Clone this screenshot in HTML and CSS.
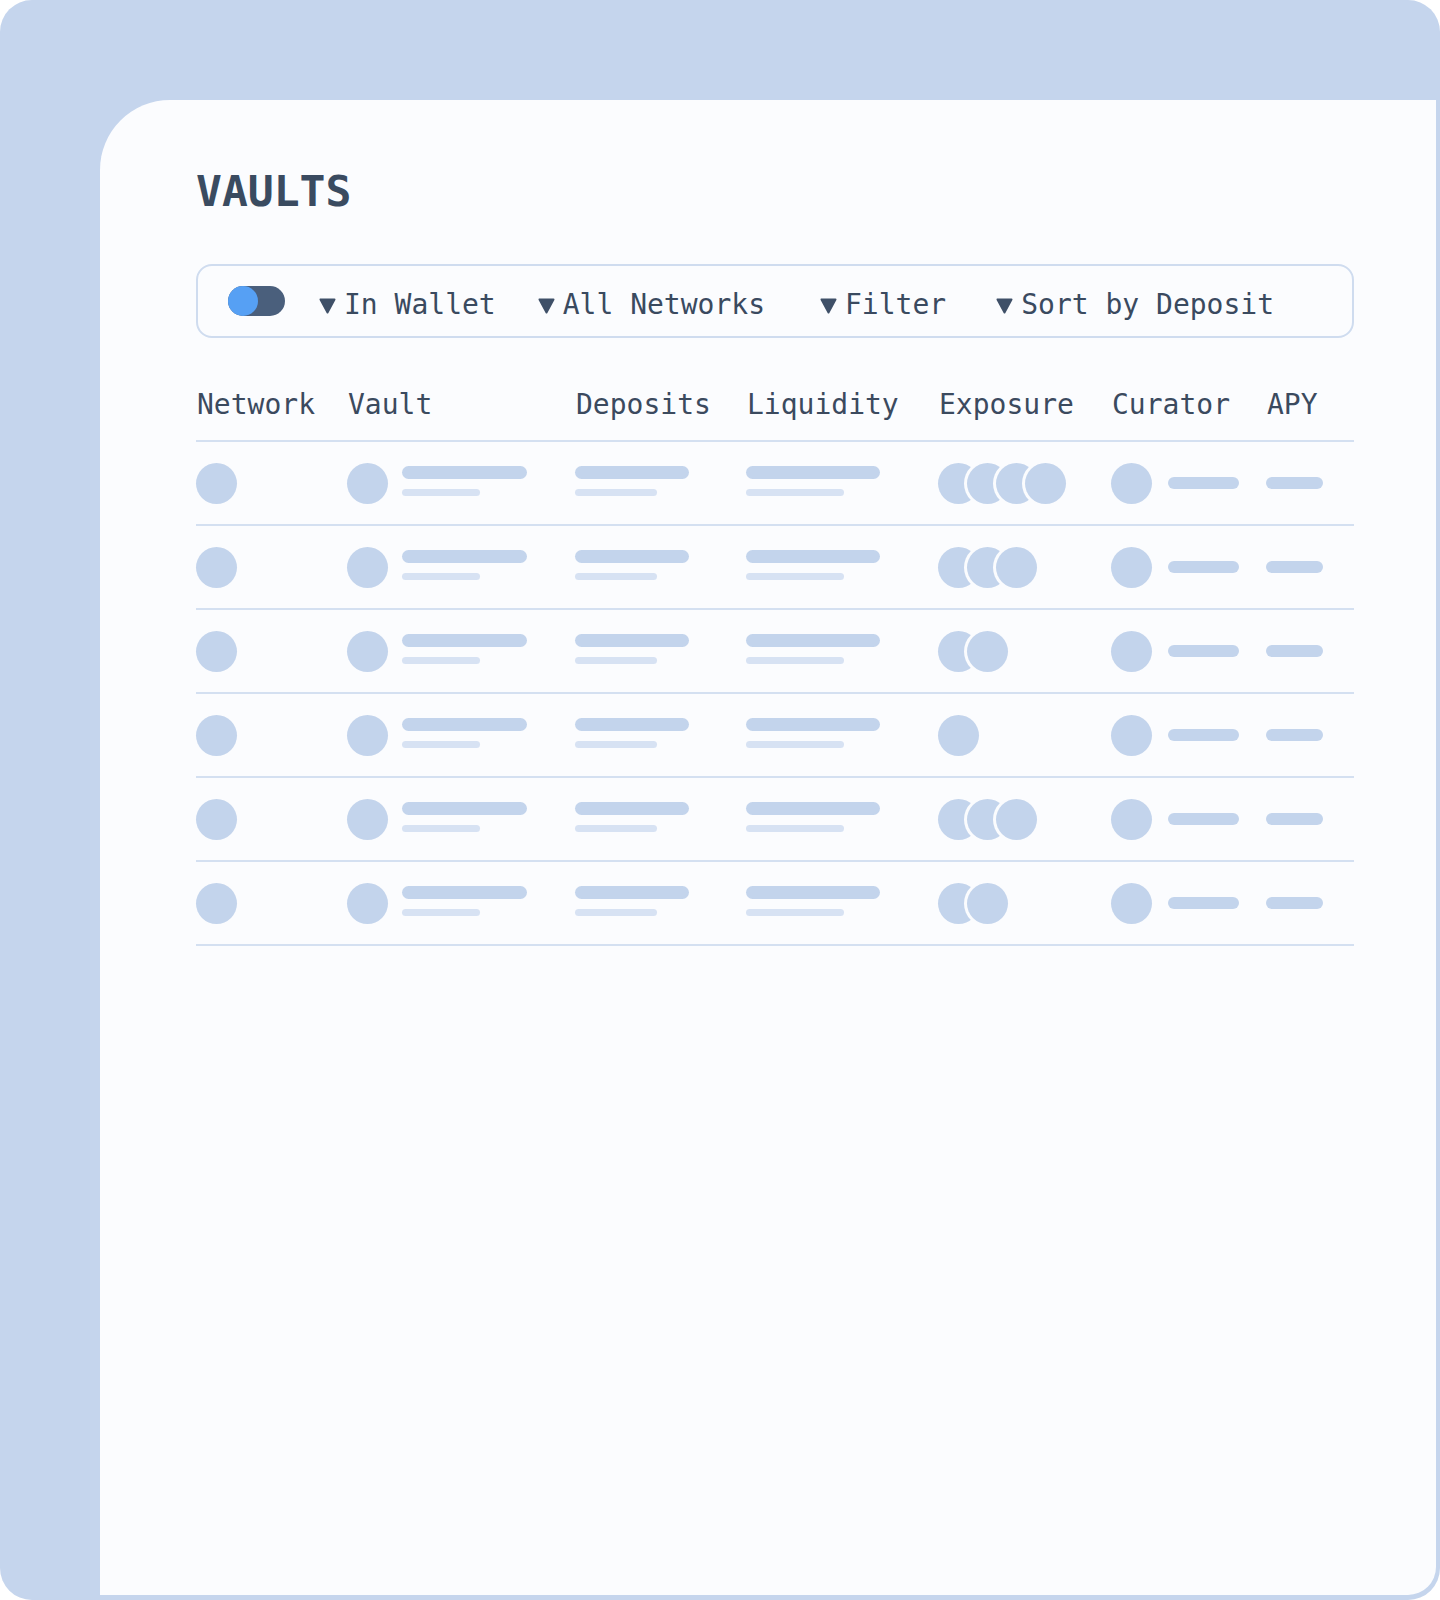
FILE: index.html
```html
<!DOCTYPE html>
<html>
<head>
<meta charset="utf-8">
<link rel="stylesheet" href="styles.css">
</head>
<body>
<div class="frame">
  <div class="panel">
    <h1 class="title">VAULTS</h1>
    <div class="toolbar">
      <div class="toggle"><span class="knob"></span></div>
      <div class="filters">
        <div class="filter"><svg class="caret" viewBox="0 0 17 16"><path d="M1.5 1.5 L15.5 1.5 L8.5 14.5 Z"/></svg><span>In Wallet</span></div>
        <div class="filter"><svg class="caret" viewBox="0 0 17 16"><path d="M1.5 1.5 L15.5 1.5 L8.5 14.5 Z"/></svg><span>All Networks</span></div>
        <div class="filter"><svg class="caret" viewBox="0 0 17 16"><path d="M1.5 1.5 L15.5 1.5 L8.5 14.5 Z"/></svg><span>Filter</span></div>
        <div class="filter"><svg class="caret" viewBox="0 0 17 16"><path d="M1.5 1.5 L15.5 1.5 L8.5 14.5 Z"/></svg><span>Sort by Deposit</span></div>
      </div>
    </div>

    <div class="table">
      <div class="row head">
        <div>Network</div><div>Vault</div><div>Deposits</div><div>Liquidity</div><div>Exposure</div><div>Curator</div><div>APY</div>
      </div>

      <div class="row">
        <div><span class="dot"></span></div>
        <div class="cell-pair"><span class="dot"></span><div class="stack"><span class="bar vault-top"></span><span class="bar lite vault-bot"></span></div></div>
        <div class="stack"><span class="bar dep-top"></span><span class="bar lite dep-bot"></span></div>
        <div class="stack"><span class="bar liq-top"></span><span class="bar lite liq-bot"></span></div>
        <div class="exposure"><span class="dot"></span><span class="dot"></span><span class="dot"></span><span class="dot"></span></div>
        <div class="curator"><span class="dot"></span><span class="bar cur"></span></div>
        <div class="apycell"><span class="bar apy"></span></div>
      </div>

      <div class="row">
        <div><span class="dot"></span></div>
        <div class="cell-pair"><span class="dot"></span><div class="stack"><span class="bar vault-top"></span><span class="bar lite vault-bot"></span></div></div>
        <div class="stack"><span class="bar dep-top"></span><span class="bar lite dep-bot"></span></div>
        <div class="stack"><span class="bar liq-top"></span><span class="bar lite liq-bot"></span></div>
        <div class="exposure"><span class="dot"></span><span class="dot"></span><span class="dot"></span></div>
        <div class="curator"><span class="dot"></span><span class="bar cur"></span></div>
        <div class="apycell"><span class="bar apy"></span></div>
      </div>

      <div class="row">
        <div><span class="dot"></span></div>
        <div class="cell-pair"><span class="dot"></span><div class="stack"><span class="bar vault-top"></span><span class="bar lite vault-bot"></span></div></div>
        <div class="stack"><span class="bar dep-top"></span><span class="bar lite dep-bot"></span></div>
        <div class="stack"><span class="bar liq-top"></span><span class="bar lite liq-bot"></span></div>
        <div class="exposure"><span class="dot"></span><span class="dot"></span></div>
        <div class="curator"><span class="dot"></span><span class="bar cur"></span></div>
        <div class="apycell"><span class="bar apy"></span></div>
      </div>

      <div class="row">
        <div><span class="dot"></span></div>
        <div class="cell-pair"><span class="dot"></span><div class="stack"><span class="bar vault-top"></span><span class="bar lite vault-bot"></span></div></div>
        <div class="stack"><span class="bar dep-top"></span><span class="bar lite dep-bot"></span></div>
        <div class="stack"><span class="bar liq-top"></span><span class="bar lite liq-bot"></span></div>
        <div class="exposure"><span class="dot"></span></div>
        <div class="curator"><span class="dot"></span><span class="bar cur"></span></div>
        <div class="apycell"><span class="bar apy"></span></div>
      </div>

      <div class="row">
        <div><span class="dot"></span></div>
        <div class="cell-pair"><span class="dot"></span><div class="stack"><span class="bar vault-top"></span><span class="bar lite vault-bot"></span></div></div>
        <div class="stack"><span class="bar dep-top"></span><span class="bar lite dep-bot"></span></div>
        <div class="stack"><span class="bar liq-top"></span><span class="bar lite liq-bot"></span></div>
        <div class="exposure"><span class="dot"></span><span class="dot"></span><span class="dot"></span></div>
        <div class="curator"><span class="dot"></span><span class="bar cur"></span></div>
        <div class="apycell"><span class="bar apy"></span></div>
      </div>

      <div class="row">
        <div><span class="dot"></span></div>
        <div class="cell-pair"><span class="dot"></span><div class="stack"><span class="bar vault-top"></span><span class="bar lite vault-bot"></span></div></div>
        <div class="stack"><span class="bar dep-top"></span><span class="bar lite dep-bot"></span></div>
        <div class="stack"><span class="bar liq-top"></span><span class="bar lite liq-bot"></span></div>
        <div class="exposure"><span class="dot"></span><span class="dot"></span></div>
        <div class="curator"><span class="dot"></span><span class="bar cur"></span></div>
        <div class="apycell"><span class="bar apy"></span></div>
      </div>
    </div>
  </div>
</div>
</body>
</html>
```

FILE: styles.css
```css
* { box-sizing: border-box; }
html, body { margin: 0; padding: 0; background: #ffffff; }
body { width: 1440px; height: 1600px; font-family: "DejaVu Sans Mono", "Liberation Mono", monospace; color: #3a4a5f; }

.frame {
  width: 1440px;
  height: 1600px;
  background: #c5d5ed;
  border-radius: 32px;
  padding: 100px 4px 5px 100px;
  display: flex;
}

.panel {
  flex: 1;
  background: #fbfcfe;
  border-radius: 70px 0 28px 0;
  padding: 65px 82px 0 96px;
}

.title {
  margin: 0;
  font-size: 43px;
  line-height: 52px;
  font-weight: bold;
  color: #3a4b60;
  letter-spacing: 0;
}

.toolbar {
  margin-top: 47px;
  height: 74px;
  border: 2px solid #cfdcef;
  border-radius: 16px;
  display: flex;
  align-items: center;
  padding-left: 30px;
}

.toggle {
  width: 57px;
  height: 30px;
  border-radius: 15px;
  background: #4a5f7c;
  margin-right: 34px;
  display: flex;
}
.knob {
  width: 30px;
  height: 30px;
  border-radius: 50%;
  background: #56a0f4;
}

.filters { display: flex; align-items: center; margin-top: 7px; }
.filter { display: flex; align-items: center; gap: 8px; font-size: 28px; line-height: 34px; color: #3a4a5f; }
.filter:nth-child(1) { margin-right: 42px; }
.filter:nth-child(2) { margin-right: 55px; }
.filter:nth-child(3) { margin-right: 50px; }
.caret { width: 17px; height: 16px; fill: #3f5068; stroke: #3f5068; stroke-width: 2; stroke-linejoin: round; margin-top: 3px; }

.table { margin-top: 50px; }

.row {
  display: grid;
  grid-template-columns: 151px 228px 171px 192px 173px 155px 1fr;
  align-items: center;
  height: 84px;
  border-bottom: 2px solid #d4e0f1;
}
.row.head {
  height: 54px;
  align-items: start;
  font-size: 28px;
  line-height: 34px;
  color: #3b4a5e;
  padding-left: 1px;
}

.dot {
  display: block;
  width: 41px;
  height: 41px;
  border-radius: 50%;
  background: #c3d4ec;
  flex: none;
}

.cell-pair { display: flex; align-items: center; gap: 14px; }
.stack { display: flex; flex-direction: column; gap: 10px; margin-top: -4px; }

.bar { display: block; height: 13px; border-radius: 7px; background: #c3d4ec; }
.bar.lite { height: 7px; border-radius: 4px; background: #d7e2f3; }

.vault-top { width: 125px; }
.vault-bot { width: 78px; }
.dep-top { width: 114px; }
.dep-bot { width: 82px; }
.liq-top { width: 134px; }
.liq-bot { width: 98px; }

.exposure { display: flex; align-items: center; }
.exposure .dot { box-shadow: 0 0 0 3px #fbfcfe; position: relative; }
.exposure .dot + .dot { margin-left: -12px; }

.curator { display: flex; align-items: center; gap: 16px; }
.bar.cur { width: 71px; height: 12px; border-radius: 6px; }
.apycell { display: flex; align-items: center; }
.bar.apy { width: 57px; height: 12px; border-radius: 6px; }
```
